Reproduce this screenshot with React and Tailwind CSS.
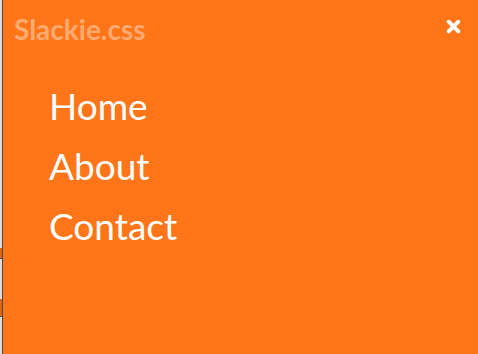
export default function App() {
  return (
    <div className="w-[478px] h-[354px] flex bg-[#e6e6e6] overflow-hidden" style={{ fontFamily: "Lato, sans-serif" }}>
      <div className="w-[2px] h-full bg-[#dcdcdc] flex flex-col">
        <div className="h-[248px]" />
        <div className="h-[10px] bg-[#d9661a]" />
        <div className="h-[1px] bg-[#555]" />
        <div className="h-[40px]" />
        <div className="h-[17px] bg-[#d9661a]" />
        <div className="h-[1px] bg-[#555]" />
      </div>
      <div className="w-[1px] h-full bg-[#4a4a4a]" />
      <div className="flex-1 h-full bg-[#ff7518] flex flex-col">
        <div className="flex items-start justify-between pl-[11px] pr-[17px] pt-[13px]">
          <span className="text-[28px] font-bold text-[#ffab70] leading-[32px]">Slackie.css</span>
          <svg width="15" height="15" viewBox="0 0 14 14" className="mt-[6px]">
            <path d="M2.5 2.5 L11.5 11.5 M11.5 2.5 L2.5 11.5" stroke="white" strokeWidth="3.6" strokeLinecap="round" />
          </svg>
        </div>
        <nav className="flex flex-col pl-[46px] pt-[31px]">
          <a className="text-[37px] text-white leading-[60px] h-[60px]">Home</a>
          <a className="text-[37px] text-white leading-[60px] h-[60px]">About</a>
          <a className="text-[37px] text-white leading-[60px] h-[60px]">Contact</a>
        </nav>
      </div>
    </div>
  );
}
